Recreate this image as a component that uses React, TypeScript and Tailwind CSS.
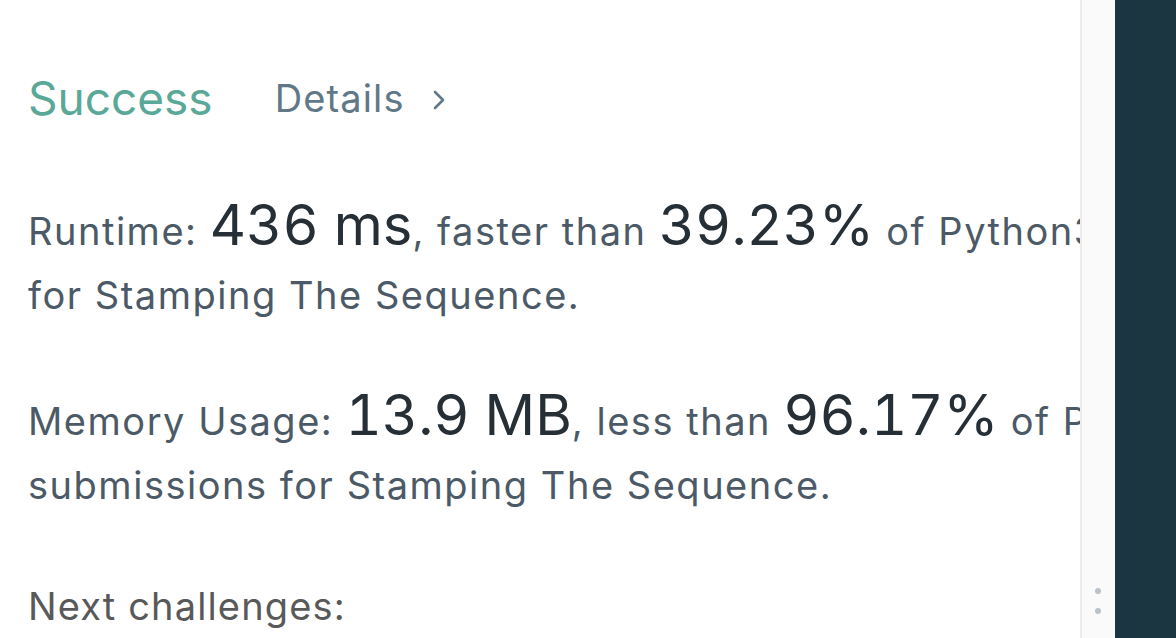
import React from "react";

export default function App() {
  return (
    <div className="flex h-[638px] w-[1176px] overflow-hidden bg-white" style={{ fontFamily: "Inter, 'Noto Sans', sans-serif" }}>
      <div className="w-[1080px] shrink-0 overflow-hidden">
        <div className="w-[1400px] pl-[28px] pt-[72px]">
          <div className="flex items-center">
            <span className="text-[46px] leading-[52px] text-[#5aa898]">Success</span>
            <span className="ml-[62px] flex items-center text-[38px] leading-[52px] tracking-[0.03em] text-[#607888]">
              Details
              <svg className="ml-[27px] mt-[4px]" width="14" height="22" viewBox="0 0 14 22" fill="none">
                <path d="M3 3 L11 11 L3 19" stroke="#607888" strokeWidth="2.6" strokeLinecap="round" strokeLinejoin="round" />
              </svg>
            </span>
          </div>
          <div className="mt-[75px] whitespace-nowrap text-[38px] leading-[64px] tracking-[0.04em] text-[#4b5a66]">
            Runtime: <span className="text-[56px] leading-[0] tracking-normal tabular-nums text-[#262f36]">436 ms</span>, faster than{" "}
            <span className="text-[56px] leading-[0] tracking-normal tabular-nums text-[#262f36]">39.23%</span> of Python3 online submissions
            <br />
            for Stamping The Sequence.
          </div>
          <div className="mt-[62px] whitespace-nowrap text-[38px] leading-[64px] tracking-[0.04em] text-[#4b5a66]">
            Memory Usage: <span className="text-[56px] leading-[0] tracking-normal tabular-nums text-[#262f36]">13.9 MB</span>, less than{" "}
            <span className="text-[56px] leading-[0] tracking-normal tabular-nums text-[#262f36]">96.17%</span> of Python3 online
            <br />
            submissions for Stamping The Sequence.
          </div>
          <div className="mt-[57px] whitespace-nowrap text-[38px] leading-[64px] tracking-[0.03em] text-[#595959]">Next challenges:</div>
        </div>
      </div>
      <div className="relative w-[35px] shrink-0 border-l-2 border-[#ececec] bg-[#fafafa]">
        <div className="absolute left-[13px] top-[588px] h-[6px] w-[6px] rounded-full bg-[#b9c3c9]" />
        <div className="absolute left-[13px] top-[608px] h-[6px] w-[6px] rounded-full bg-[#b9c3c9]" />
      </div>
      <div className="flex-1 bg-[#1b3541]" />
    </div>
  );
}
